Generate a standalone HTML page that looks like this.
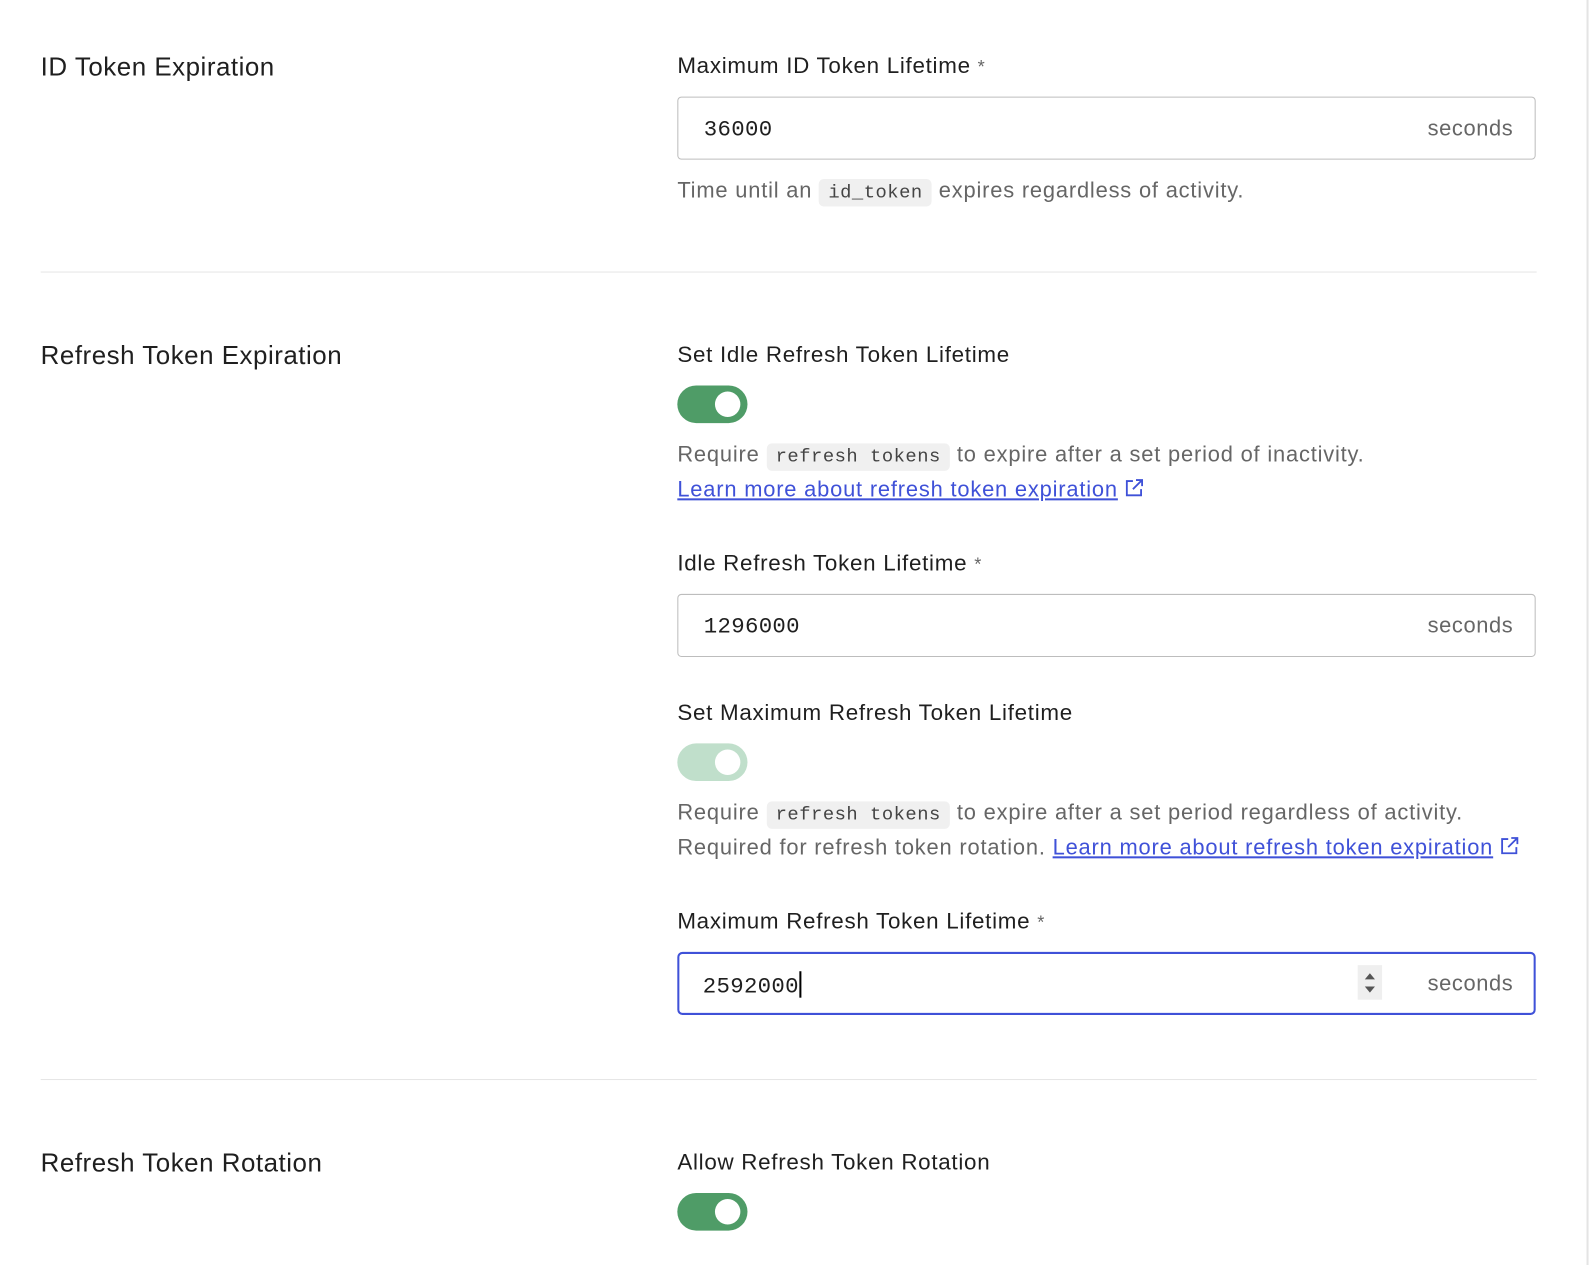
<!DOCTYPE html>
<html><head><meta charset="utf-8"><style>
body{margin:0;width:1594px;height:1244px;background:#fff;position:relative;overflow:hidden;font-family:"Liberation Sans",sans-serif;color:#1f1f1f}
#w{position:absolute;left:0;top:0;width:1562px;height:1220px;transform:scale(1.017);transform-origin:0 0}
.a{position:absolute;white-space:nowrap}
.h{font-size:25.5px;line-height:30px;letter-spacing:0.5px}
.l{font-size:22px;line-height:26px;color:#1f1f1f;letter-spacing:0.7px}
.l .s{color:#666;font-size:18px}
.d{font-size:21.5px;line-height:26px;color:#666;letter-spacing:0.8px}
code{font-family:"Liberation Mono",monospace;font-size:18.5px;background:#f0f0f0;border-radius:5px;padding:3px 9px;color:#444;letter-spacing:0.5px}
.in{position:absolute;left:666px;width:842px;height:60px;border:1px solid #bdbdbd;border-radius:4px;box-sizing:content-box}
.in .v{position:absolute;left:25px;top:19px;font-family:"Liberation Mono",monospace;font-size:22px;color:#1f1f1f;letter-spacing:0.3px}
.in .u{position:absolute;right:21px;top:18px;font-size:21.5px;color:#666;letter-spacing:0.6px}
.hr{position:absolute;left:40px;width:1471px;height:1px;background:#e6e6e6}
.t{position:absolute;left:666px;width:69px;height:37px;border-radius:19px;background:#4f9c67}
.t::after{content:"";position:absolute;right:7px;top:6px;width:25px;height:25px;border-radius:50%;background:#fff}
a{color:#3f51d8;text-decoration:underline}
.ext{display:inline-block;vertical-align:-2px;margin-left:6px}
</style></head><body>
<div id="w">
<div style="position:absolute;left:1560px;top:0;width:2px;height:1244px;background:#e4e4e4"></div>

<div class="a h" style="left:40px;top:51px">ID Token Expiration</div>
<div class="a l" style="left:666px;top:52px">Maximum ID Token Lifetime <span class="s">*</span></div>
<div class="in" style="top:95px"><span class="v">36000</span><span class="u">seconds</span></div>
<div class="a d" style="left:666px;top:174px">Time until an <code>id_token</code> expires regardless of activity.</div>
<div class="hr" style="top:267px"></div>

<div class="a h" style="left:40px;top:335px">Refresh Token Expiration</div>
<div class="a l" style="left:666px;top:336px">Set Idle Refresh Token Lifetime</div>
<div class="t" style="top:379px"></div>
<div class="a d" style="left:666px;top:434px">Require <code>refresh tokens</code> to expire after a set period of inactivity.</div>
<div class="a d" style="left:666px;top:468px"><a>Learn more about refresh token expiration</a><svg class="ext" width="20" height="20" viewBox="0 0 20 20" fill="none" stroke="#3f51d8" stroke-width="1.8"><path d="M9 3H3v14h14v-6M12 2h6v6M18 2l-9 9"/></svg></div>
<div class="a l" style="left:666px;top:541px">Idle Refresh Token Lifetime <span class="s">*</span></div>
<div class="in" style="top:584px"><span class="v">1296000</span><span class="u">seconds</span></div>
<div class="a l" style="left:666px;top:688px">Set Maximum Refresh Token Lifetime</div>
<div class="t" style="top:731px;background:#c0dfcb"></div>
<div class="a d" style="left:666px;top:786px">Require <code>refresh tokens</code> to expire after a set period regardless of activity.</div>
<div class="a d" style="left:666px;top:820px">Required for refresh token rotation. <a>Learn more about refresh token expiration</a><svg class="ext" width="20" height="20" viewBox="0 0 20 20" fill="none" stroke="#3f51d8" stroke-width="1.8"><path d="M9 3H3v14h14v-6M12 2h6v6M18 2l-9 9"/></svg></div>
<div class="a l" style="left:666px;top:893px">Maximum Refresh Token Lifetime <span class="s">*</span></div>
<div class="in" style="top:936px;border:2px solid #3f51d8;width:840px;height:58px;border-radius:5px"><span class="v" style="left:23px;top:17px">2592000<span style="display:inline-block;width:2px;height:26px;background:#000;vertical-align:-5px"></span></span>
<div style="position:absolute;left:667px;top:11px;width:24px;height:34px;background:#efefef"><svg width="24" height="34"><path d="M7 14l5-6 5 6z M7 21l5 6 5-6z" fill="#555"/></svg></div>
<span class="u" style="right:20px;top:17px">seconds</span></div>
<div class="hr" style="top:1061px"></div>

<div class="a h" style="left:40px;top:1129px">Refresh Token Rotation</div>
<div class="a l" style="left:666px;top:1130px">Allow Refresh Token Rotation</div>
<div class="t" style="top:1173px"></div>
</div>
</body></html>
